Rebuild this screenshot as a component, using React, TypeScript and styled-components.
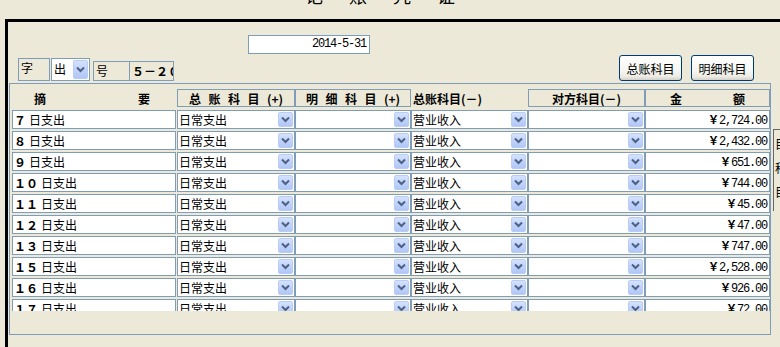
import React from 'react';
import styled, { createGlobalStyle } from 'styled-components';

const GlobalStyle = createGlobalStyle`
  html, body { margin: 0; padding: 0; background: #ECE9D8; }
  body {
    width: 780px; height: 347px; overflow: hidden;
    font-family: "Noto Sans CJK SC", "Liberation Sans", sans-serif;
    font-size: 12px; color: #000;
  }
  * { box-sizing: border-box; }
`;

const CJK = `"Noto Sans CJK SC", "Liberation Sans", sans-serif`;
const MONO = `"Liberation Mono", "Noto Sans CJK SC", monospace`;
const BORDER = '#7F9DB9';

const Page = styled.div`
  width: 780px;
  height: 347px;
  overflow: hidden;
  background: #ECE9D8;
  display: flex;
  flex-direction: column;
`;

const Title = styled.div`
  height: 19px;
  overflow: hidden;
  padding-left: 305px;
`;

const TitleText = styled.div`
  margin-top: -14px;
  font-family: ${CJK};
  font-size: 18px;
  line-height: 18px;
  letter-spacing: 26px;
  white-space: nowrap;
`;

const Frame = styled.div`
  flex: 1;
  margin-left: 5px;
  border-top: 3px solid #000;
  border-left: 3px solid #000;
  display: flex;
  flex-direction: column;
  min-height: 0;
`;

const DateRow = styled.div`
  padding-top: 13px;
  padding-left: 240px;
  display: flex;
`;

const DateBox = styled.div`
  width: 122px;
  height: 19px;
  border: 1px solid ${BORDER};
  background: #fff;
  text-align: right;
  padding-right: 3px;
  font-family: ${MONO};
  font-size: 12px;
  letter-spacing: -1.2px;
  line-height: 17px;
`;

const ControlsRow = styled.div`
  margin-top: 1px;
  height: 26px;
  display: flex;
  align-items: flex-end;
  padding-left: 10px;
  padding-right: 26px;
`;

const LabelBox = styled.div<{ $w: number; $h: number; $ml?: number; $bold?: boolean }>`
  width: ${p => p.$w}px;
  height: ${p => p.$h}px;
  margin-left: ${p => p.$ml ?? 0}px;
  border: 1px solid ${BORDER};
  padding: 2px 0 0 2px;
  font-family: ${CJK};
  font-size: 12px;
  line-height: 14px;
  font-weight: ${p => (p.$bold ? 700 : 400)};
  white-space: nowrap;
  overflow: hidden;
`;

const MiniSelect = styled.div`
  width: 39px;
  height: 23px;
  margin-left: 1px;
  border: 1px solid ${BORDER};
  background: #fff;
  display: flex;
  align-items: flex-start;
  justify-content: space-between;
  padding: 1px 1px 1px 2px;
  font-size: 12px;
  line-height: 18px;
`;

const XPButton = styled.button<{ $ml?: number }>`
  align-self: flex-start;
  width: 63px;
  height: 26px;
  margin-left: ${p => p.$ml ?? 0}px;
  border: 1px solid #003C74;
  border-radius: 3px;
  background: linear-gradient(180deg, #FFFFFF 0%, #F6F6F2 60%, #ECEBE6 85%, #D6D0C5 100%);
  font-family: ${CJK};
  font-size: 12px;
  color: #000;
  padding: 0;
  cursor: default;
`;

const Spacer = styled.div`flex: 1;`;

const PanelRow = styled.div`
  margin-top: 2px;
  display: flex;
  align-items: flex-start;
`;

const Panel = styled.div`
  margin-left: 1px;
  width: 766px;
  height: 252px;
  border: 1px solid ${BORDER};
`;

const ScrollArea = styled.div`
  height: 227px;
  overflow: hidden;
  padding: 5px 0 0 2px;
`;

const Grid = styled.div`
  display: grid;
  grid-template-columns: 165px 118px 116px 117px 117px 125px;
  grid-template-rows: 19px;
  grid-auto-rows: 19px;
  row-gap: 2px;
`;

const HeaderCell = styled.div<{ $boxed?: boolean; $split?: boolean; $pl?: number; $pr?: number }>`
  height: 18px;
  border: 1px solid ${p => (p.$boxed ? BORDER : 'transparent')};
  display: flex;
  align-items: center;
  justify-content: ${p => (p.$split ? 'space-between' : p.$boxed ? 'center' : 'flex-start')};
  padding-left: ${p => p.$pl ?? 0}px;
  padding-right: ${p => p.$pr ?? 0}px;
  font-family: ${CJK};
  font-size: 12px;
  font-weight: 700;
  white-space: nowrap;
`;

const Spaced = styled.span`
  letter-spacing: 7.5px;
`;

const TextBox = styled.div`
  width: 164px;
  height: 19px;
  border: 1px solid ${BORDER};
  background: #fff;
  padding-left: 1px;
  font-family: ${CJK};
  font-size: 12px;
  line-height: 17px;
  white-space: nowrap;
`;

const Num = styled.span`
  font-weight: 700;
  margin-right: 3px;
`;

const Combo = styled.div`
  height: 19px;
  border: 1px solid ${BORDER};
  background: #fff;
  display: flex;
  align-items: center;
  justify-content: space-between;
  padding: 1px;
  font-family: ${CJK};
  font-size: 12px;
  line-height: 15px;
  white-space: nowrap;
  overflow: hidden;
`;

const DropBtn = styled.div<{ $h?: number }>`
  flex: none;
  width: 15px;
  height: ${p => p.$h ?? 15}px;
  border-radius: 2px;
  border: 1px solid #B9CCF6;
  background: linear-gradient(180deg, #D5E2FD 0%, #C1D3FB 50%, #B0C7F6 100%);
  display: flex;
  align-items: center;
  justify-content: center;
`;

const AmountBox = styled.div`
  height: 19px;
  border: 1px solid ${BORDER};
  background: #fff;
  text-align: right;
  padding-right: 2px;
  font-family: ${MONO};
  font-size: 12px;
  line-height: 17px;
  letter-spacing: -1.2px;
  white-space: nowrap;
`;

const Yen = styled.span`
  font-family: ${CJK};
  font-weight: 700;
  font-size: 11px;
  letter-spacing: 0;
`;

const SideStrip = styled.div`
  margin-left: 2px;
  margin-top: 46px;
  width: 10px;
  height: 82px;
  border-left: 1px solid #666;
  border-top: 1px solid #666;
  padding: 2px 0 0 1px;
  font-family: ${CJK};
  font-size: 12px;
  line-height: 24px;
  overflow: hidden;
  white-space: nowrap;
`;

const Chevron = () => (
  <svg width="9" height="7" viewBox="0 0 9 7">
    <polyline points="1,1.5 4.5,5 8,1.5" fill="none" stroke="#4D6185" strokeWidth="2" />
  </svg>
);

const Select = ({ value }: { value: string }) => (
  <Combo>
    <span>{value}</span>
    <DropBtn>
      <Chevron />
    </DropBtn>
  </Combo>
);

const rows: { n: string; amt: string }[] = [
  { n: '７', amt: '2,724.00' },
  { n: '８', amt: '2,432.00' },
  { n: '９', amt: '651.00' },
  { n: '１０', amt: '744.00' },
  { n: '１１', amt: '45.00' },
  { n: '１２', amt: '47.00' },
  { n: '１３', amt: '747.00' },
  { n: '１５', amt: '2,528.00' },
  { n: '１６', amt: '926.00' },
  { n: '１７', amt: '72.00' },
];

export default function App() {
  return (
    <>
      <GlobalStyle />
      <Page>
        <Title>
          <TitleText>记账凭证</TitleText>
        </Title>
        <Frame>
          <DateRow>
            <DateBox>2014-5-31</DateBox>
          </DateRow>
          <ControlsRow>
            <LabelBox $w={32} $h={23}>字</LabelBox>
            <MiniSelect>
              <span>出</span>
              <DropBtn $h={19}>
                <Chevron />
              </DropBtn>
            </MiniSelect>
            <LabelBox $w={37} $h={20} $ml={3}>号</LabelBox>
            <LabelBox $w={45} $h={20} $ml={-1} $bold>５－２０</LabelBox>
            <Spacer />
            <XPButton>总账科目</XPButton>
            <XPButton $ml={9}>明细科目</XPButton>
          </ControlsRow>
          <PanelRow>
            <Panel>
              <ScrollArea>
                <Grid>
                  <HeaderCell $split $pl={21} $pr={26}>
                    <span>摘</span>
                    <span>要</span>
                  </HeaderCell>
                  <HeaderCell $boxed>
                    <Spaced>总账科目</Spaced>(+)
                  </HeaderCell>
                  <HeaderCell $boxed>
                    <Spaced>明细科目</Spaced>(+)
                  </HeaderCell>
                  <HeaderCell $pl={1}>总账科目(－)</HeaderCell>
                  <HeaderCell $boxed>对方科目(－)</HeaderCell>
                  <HeaderCell $boxed $split $pl={24} $pr={24}>
                    <span>金</span>
                    <span>额</span>
                  </HeaderCell>
                  {rows.map(r => (
                    <React.Fragment key={r.n}>
                      <TextBox>
                        <Num>{r.n}</Num>日支出
                      </TextBox>
                      <Select value="日常支出" />
                      <Select value="" />
                      <Select value="营业收入" />
                      <Select value="" />
                      <AmountBox>
                        <Yen>￥</Yen>
                        {r.amt}
                      </AmountBox>
                    </React.Fragment>
                  ))}
                </Grid>
              </ScrollArea>
            </Panel>
            <SideStrip>
              目<br />科<br />目
            </SideStrip>
          </PanelRow>
        </Frame>
      </Page>
    </>
  );
}
